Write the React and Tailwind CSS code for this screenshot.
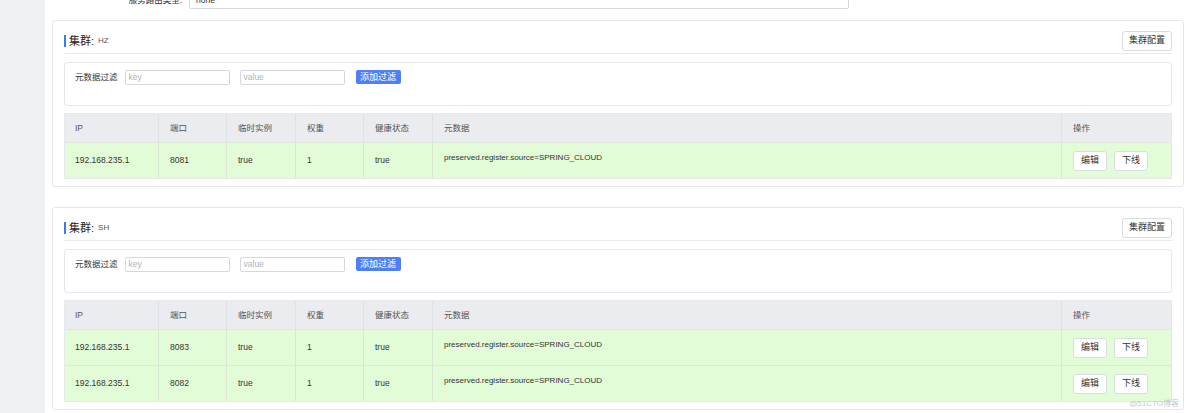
import React from 'react';

const COLS = 'grid grid-cols-[93px_68px_69px_68px_69px_1fr_110px]';
const headers = ['IP', '端口', '临时实例', '权重', '健康状态', '元数据', '操作'];

const FilterBox = () => (
  <div className="mt-[8px] h-[44px] border border-[#e6e8ec] rounded-[3px] flex items-start pt-[7px] pl-[10px] text-[8.5px] text-[#333]">
    <span className="leading-[15px] mr-[7px]">元数据过滤</span>
    <div className="w-[105px] h-[15px] border border-[#d4d7dd] rounded-[2px] px-[3px] leading-[13px] text-[#b0b3b8]">key</div>
    <div className="ml-[10px] w-[105px] h-[15px] border border-[#d4d7dd] rounded-[2px] px-[3px] leading-[13px] text-[#b0b3b8]">value</div>
    <button className="ml-[11px] h-[14px] w-[45px] bg-[#4e7ff9] text-white rounded-[2px] leading-[14px] text-[9px]">添加过滤</button>
  </div>
);

const Row = ({ port }) => (
  <div className={`${COLS} h-[36px] bg-[#e2fcd8] border-t border-[#dde8d6] text-[8.5px] text-[#333]`}>
    <div className="pl-[10px] flex items-center">192.168.235.1</div>
    <div className="pl-[11px] flex items-center border-l border-[#d9e6d2]">{port}</div>
    <div className="pl-[11px] flex items-center border-l border-[#d9e6d2]">true</div>
    <div className="pl-[11px] flex items-center border-l border-[#d9e6d2]">1</div>
    <div className="pl-[11px] flex items-center border-l border-[#d9e6d2]">true</div>
    <div className="pl-[11px] pt-[9px] border-l border-[#d9e6d2] text-[8px]">preserved.register.source=SPRING_CLOUD</div>
    <div className="pl-[11px] flex items-center gap-[7px] border-l border-[#d9e6d2]">
      <button className="w-[34px] h-[20px] bg-white border border-[#d9dce1] rounded-[3px] text-[9px]">编辑</button>
      <button className="w-[34px] h-[20px] bg-white border border-[#d9dce1] rounded-[3px] text-[9px]">下线</button>
    </div>
  </div>
);

const Cluster = ({ name, ports, className }) => (
  <div className={`border border-[#e4e6ea] rounded-[3px] px-[11px] pb-[7px] ${className}`}>
    <div className="pt-[10px] pb-[2px] border-b border-[#e8eaee] flex items-center justify-between">
      <div className="h-[20px] flex items-center">
        <span className="w-[2px] h-[12px] bg-[#3b78f6] mr-[3px]" />
        <span className="text-[11px] text-[#222]">集群:</span>
        <span className="ml-[4px] text-[8px] text-[#555]">{name}</span>
      </div>
      <button className="w-[50px] h-[20px] bg-white border border-[#d9dce1] rounded-[3px] text-[9px] text-[#333]">集群配置</button>
    </div>
    <FilterBox />
    <div className="mt-[7px] border border-[#e6e8ec]">
      <div className={`${COLS} h-[28px] bg-[#ebecf0] text-[8.5px] text-[#555]`}>
        {headers.map((h, i) => (
          <div key={h} className={`${i ? 'pl-[11px] border-l border-[#dfe1e6]' : 'pl-[10px]'} flex items-center`}>{h}</div>
        ))}
      </div>
      {ports.map(p => <Row key={p} port={p} />)}
    </div>
  </div>
);

export default function App() {
  return (
    <div className="relative w-[1184px] h-[413px] overflow-hidden flex bg-white" style={{ fontFamily: '"Liberation Sans", "Noto Sans CJK SC", sans-serif' }}>
      <div className="w-[45px] bg-[#eef0f4] shrink-0" />
      <div className="flex-1 pl-[7px]">
        <div className="mt-[-8px] h-[17px] flex items-center text-[8.5px] text-[#333]">
          <div className="w-[137px] text-right pr-[7px]">服务路由类型:</div>
          <div className="w-[660px] h-[17px] border border-[#d4d7dd] rounded-[2px] px-[6px] flex items-center">none</div>
        </div>
        <Cluster name="HZ" ports={['8081']} className="mt-[11px]" />
        <Cluster name="SH" ports={['8083', '8082']} className="mt-[20px]" />
      </div>
      <div className="absolute right-[5px] bottom-[3px] text-[8px] text-[#c8cacd]">@51CTO博客</div>
    </div>
  );
}
